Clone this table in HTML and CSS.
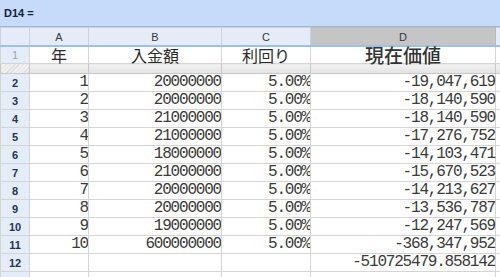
FILE: index.html
```html
<!DOCTYPE html>
<html lang="ja">
<head>
<meta charset="utf-8">
<link rel="stylesheet" href="styles.css">
</head>
<body>
<div class="formula-bar"><span class="cell-ref">D14 =</span></div>
<table class="sheet">
  <colgroup>
    <col class="c-rh"><col class="c-a"><col class="c-b"><col class="c-c"><col class="c-d"><col class="c-e">
  </colgroup>
  <thead>
    <tr class="col-head">
      <th class="corner"></th><th>A</th><th>B</th><th>C</th><th class="sel">D</th><th></th>
    </tr>
  </thead>
  <tbody>
    <tr class="r1">
      <th class="rh">1</th>
      <td class="hd">年</td><td class="hd">入金額</td><td class="hd">利回り</td><td class="hd hd-d">現在価値</td><td></td>
    </tr>
    <tr class="split">
      <th class="rh hatch"></th><td></td><td></td><td></td><td></td><td></td>
    </tr>
    <tr><th class="rh">2</th><td class="n na">1</td><td class="n nb">20000000</td><td class="n nc">5.00%</td><td class="n nd">-19,047,619</td><td></td></tr>
    <tr><th class="rh">3</th><td class="n na">2</td><td class="n nb">20000000</td><td class="n nc">5.00%</td><td class="n nd">-18,140,590</td><td></td></tr>
    <tr><th class="rh">4</th><td class="n na">3</td><td class="n nb">21000000</td><td class="n nc">5.00%</td><td class="n nd">-18,140,590</td><td></td></tr>
    <tr><th class="rh">5</th><td class="n na">4</td><td class="n nb">21000000</td><td class="n nc">5.00%</td><td class="n nd">-17,276,752</td><td></td></tr>
    <tr><th class="rh">6</th><td class="n na">5</td><td class="n nb">18000000</td><td class="n nc">5.00%</td><td class="n nd">-14,103,471</td><td></td></tr>
    <tr><th class="rh">7</th><td class="n na">6</td><td class="n nb">21000000</td><td class="n nc">5.00%</td><td class="n nd">-15,670,523</td><td></td></tr>
    <tr><th class="rh">8</th><td class="n na">7</td><td class="n nb">20000000</td><td class="n nc">5.00%</td><td class="n nd">-14,213,627</td><td></td></tr>
    <tr><th class="rh">9</th><td class="n na">8</td><td class="n nb">20000000</td><td class="n nc">5.00%</td><td class="n nd">-13,536,787</td><td></td></tr>
    <tr><th class="rh">10</th><td class="n na">9</td><td class="n nb">19000000</td><td class="n nc">5.00%</td><td class="n nd">-12,247,569</td><td></td></tr>
    <tr><th class="rh">11</th><td class="n na">10</td><td class="n nb">600000000</td><td class="n nc">5.00%</td><td class="n nd">-368,347,952</td><td></td></tr>
    <tr><th class="rh">12</th><td></td><td></td><td></td><td class="n nd">-510725479.858142</td><td></td></tr>
    <tr><th class="rh">13</th><td></td><td></td><td></td><td></td><td></td></tr>
  </tbody>
</table>
</body>
</html>
```
FILE: styles.css
```css
html, body {
  margin: 0;
  padding: 0;
  width: 500px;
  height: 277px;
  overflow: hidden;
  background: #ffffff;
  font-family: "Liberation Sans", Arial, sans-serif;
}

.formula-bar {
  width: 500px;
  height: 27px;
  background: #c6dafa;
  border-bottom: 1px solid #a9b6c8;
  display: flex;
  align-items: center;
  padding-left: 4px;
  box-sizing: border-box;
}

.cell-ref {
  font-size: 11px;
  font-weight: bold;
  color: #14213a;
}

.sheet {
  border-collapse: collapse;
  table-layout: fixed;
  width: 500px;
}

.c-rh { width: 29px; }
.c-a { width: 59px; }
.c-b { width: 133px; }
.c-c { width: 89px; }
.c-d { width: 185px; }
.c-e { width: 5px; }

.sheet td, .sheet th {
  padding: 0;
  border: 1px solid #d4d4d4;
  overflow: hidden;
  white-space: nowrap;
}

.col-head th {
  height: 17px;
  background: #e5ecf7;
  border-color: #c9d2df;
  border-bottom: 2px solid #9fbfe9;
  font-size: 11px;
  font-weight: normal;
  color: #333a44;
  text-align: center;
  vertical-align: middle;
}

.col-head th.sel {
  background: #c5c5c5;
  border-color: #b9b9b9;
  border-bottom-color: #9fbfe9;
}

.corner {
  background: #e5ecf7;
}

.rh {
  background: #e4ecf8;
  border-color: #c9d2df;
  font-size: 11px;
  font-weight: bold;
  color: #243552;
  text-align: center;
}

.r1 td, .r1 th {
  height: 16px;
}

.r1 .rh {
  color: #9aa5b6;
  font-weight: normal;
}

.sheet td.hd {
  font-family: "Noto Sans CJK JP", sans-serif;
  font-size: 16px;
  line-height: 16px;
  color: #2a2a2a;
  text-align: center;
  overflow: visible;
}

.sheet td.hd-d {
  font-size: 19px;
  font-weight: 500;
  color: #333333;
}

.split td, .split th {
  height: 9px;
  background: linear-gradient(#f2f2f2, #e2e2e2);
  border-color: #c8c8c8;
}

.split th.hatch {
  background: repeating-linear-gradient(135deg, #d8d8d8 0 1px, #f4f4f4 1px 3px);
}

tbody tr td, tbody tr th {
  height: 17px;
}

.n {
  font-family: "Liberation Mono", monospace;
  font-size: 16px;
  letter-spacing: -1.2px;
  line-height: 17px;
  color: #3a3a3a;
  text-align: right;
}

.sheet td.nd {
  overflow: visible;
}

.na { padding-right: 6px; }
.nb { padding-right: 8px; }
.nc { padding-right: 2px; }
.nd { padding-right: 4px; }
```
